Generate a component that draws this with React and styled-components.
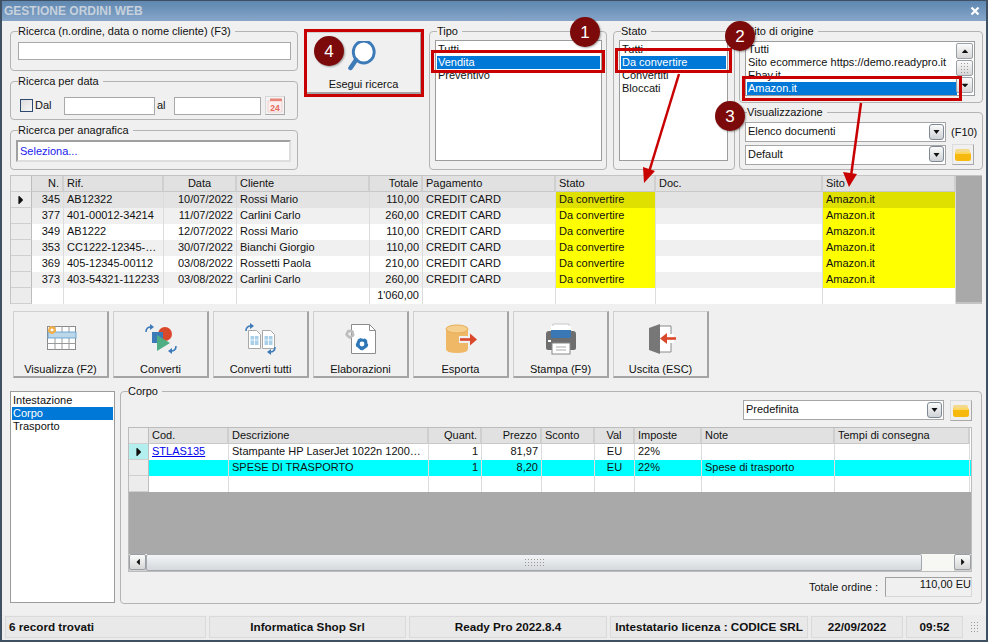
import React from "react";
import styled, { createGlobalStyle } from "styled-components";
import { FaCaretDown, FaCaretRight, FaCaretLeft, FaCaretUp } from "react-icons/fa";

const Global = createGlobalStyle`
  html, body { margin: 0; padding: 0; background: #f0f0f0; }
  * { box-sizing: border-box; }
`;

const Page = styled.div`
  position: relative;
  width: 988px;
  height: 642px;
  padding: 1px 2px 2px 2px;
  background: #3f5063;
  font-family: "Liberation Sans", "Noto Sans", sans-serif;
  font-size: 11px;
  line-height: 13px;
  color: #111;
  overflow: hidden;
`;

const Window = styled.div`
  height: 100%;
  display: flex;
  flex-direction: column;
  background: #f0f0f0;
`;

const TitleBar = styled.div`
  height: 20px;
  flex: none;
  display: flex;
  align-items: center;
  justify-content: space-between;
  padding: 0 6px 0 2px;
  background: linear-gradient(#5f87b0, #86a6c9);
  color: #c6d1dd;
  font-family: "Liberation Sans", sans-serif;
  font-weight: 700;
  font-size: 12px;
`;

const Content = styled.div`
  flex: 1;
  display: flex;
  flex-direction: column;
  padding: 10px 4px 0 8px;
`;

const TopRow = styled.div`
  display: flex;
  height: 139px;
  flex: none;
`;

const Column = styled.div`
  display: flex;
  flex-direction: column;
  width: ${(p) => p.$w}px;
  margin-left: ${(p) => p.$ml || 0}px;
  gap: ${(p) => p.$gap || 0}px;
  flex: none;
`;

const Group = styled.div`
  position: relative;
  flex: ${(p) => (p.$h ? "none" : 1)};
  height: ${(p) => (p.$h ? p.$h + "px" : "auto")};
  width: ${(p) => (p.$w ? p.$w + "px" : "auto")};
  margin-left: ${(p) => p.$ml || 0}px;
  border: 1px solid #b4b4b4;
  border-radius: 4px;
  padding: ${(p) => p.$pad || "9px 5px 5px"};
`;

const Legend = styled.span`
  position: absolute;
  left: 7px;
  top: -7px;
  padding: 0 4px 0 0;
  background: #f0f0f0;
  white-space: nowrap;
`;

const TextInput = styled.div`
  background: #fff;
  border: 1px solid #a8a8a8;
  height: ${(p) => p.$h || 18}px;
  width: ${(p) => (p.$w ? p.$w + "px" : "auto")};
  flex: ${(p) => (p.$w ? "none" : 1)};
  margin-left: ${(p) => p.$ml || 0}px;
`;

const SunkenInput = styled.div`
  height: 22px;
  background: #fff;
  border: 2px solid;
  border-color: #a0a0a0 #dedede #dedede #a0a0a0;
  color: #1a1aee;
  padding: 3px 2px;
`;

const DateRow = styled.div`
  display: flex;
  align-items: center;
  padding: 5px 0 0 4px;
`;

const Check = styled.span`
  width: 13px;
  height: 13px;
  border: 1px solid #2d4a6e;
  background: linear-gradient(135deg, #dcdcdc, #f6f6f6);
  flex: none;
`;

const DateLabel = styled.span`
  width: ${(p) => p.$w}px;
  padding-left: ${(p) => p.$pl}px;
  flex: none;
`;

const CalButton = styled.span`
  margin-left: 4px;
  width: 20px;
  height: 19px;
  flex: none;
  border: 1px solid;
  border-color: #d8d8d8 #a8a8a8 #a8a8a8 #d8d8d8;
  background: #f4f4f4;
  display: flex;
  align-items: center;
  justify-content: center;
`;

const BigButton = styled.div`
  width: 116px;
  height: 62px;
  margin: 1px 0 0 2px;
  display: flex;
  flex-direction: column;
  align-items: center;
  padding-top: 8px;
  gap: 5px;
  border: 1px solid;
  border-color: #d0d0d0 #a4a4a4 #a4a4a4 #d0d0d0;
  border-width: 1px 2px 2px 1px;
`;

const List = styled.div`
  background: #fff;
  border: 1px solid #9c9c9c;
  height: ${(p) => (p.$h ? p.$h + "px" : "auto")};
  flex: ${(p) => (p.$h ? "none" : 1)};
  width: ${(p) => (p.$w ? p.$w + "px" : "auto")};
  padding: ${(p) => p.$pad || "1px"};
  position: relative;
  overflow: hidden;
`;

const ListItem = styled.div`
  height: 13px;
  padding-left: 1px;
  white-space: nowrap;
  background: ${(p) => (p.$on ? "#0078d7" : "transparent")};
  color: ${(p) => (p.$on ? "#fff" : "#111")};
  margin-right: ${(p) => p.$mr || 0}px;
`;

const ListScroll = styled.div`
  position: absolute;
  right: 1px;
  top: 1px;
  width: 17px;
  display: flex;
  flex-direction: column;
  gap: 1px;
`;

const ScrollBtn = styled.span`
  height: ${(p) => p.$h || 16}px;
  width: ${(p) => p.$w || 17}px;
  flex: none;
  display: flex;
  align-items: center;
  justify-content: center;
  border: 1px solid #9aa0a6;
  border-radius: 2px;
  background: linear-gradient(#fbfbfb, #d6d6d6);
  color: #111;
  font-size: 10px;
`;

const ComboRow = styled.div`
  display: flex;
  align-items: center;
  margin: ${(p) => p.$m || "0"};
`;

const Combo = styled.div`
  width: ${(p) => p.$w || 201}px;
  height: 20px;
  flex: none;
  background: #fff;
  border: 1px solid #a6a6a6;
  display: flex;
  align-items: center;
  justify-content: space-between;
  padding: 0 1px 1px 2px;
`;

const FolderButton = styled.span`
  width: 22px;
  height: 21px;
  flex: none;
  margin-left: ${(p) => p.$ml || 6}px;
  border: 1px solid;
  border-color: #dcdcdc #a8a8a8 #a8a8a8 #dcdcdc;
  display: flex;
  align-items: center;
  justify-content: center;
`;

const Hint = styled.span`
  margin-left: 5px;
  white-space: nowrap;
`;

const GridWrap = styled.div`
  display: flex;
  flex: none;
  height: 129px;
  margin-top: 5px;
  border: 1px solid #c4c4c4;
  border-bottom-width: 2px;
  border-right: 0;
`;

const GridBody = styled.div`
  flex: none;
  background: #fff;
`;

const GreySide = styled.div`
  flex: 1;
  background: #a9a9a9;
`;

const Row = styled.div`
  display: grid;
  grid-template-columns: ${(p) => p.$cols};
  height: ${(p) => p.$h || 16}px;
  background: ${(p) => p.$bg || "#fff"};
`;

const Cell = styled.div`
  padding: 0 3px;
  line-height: 14px;
  white-space: nowrap;
  overflow: hidden;
  text-overflow: ellipsis;
  text-align: ${(p) => p.$align || "left"};
  border-right: 1px solid #dcdcdc;
  background: ${(p) => p.$bg || "transparent"};
  color: ${(p) => (p.$link ? "#0000ee" : "inherit")};
  text-decoration: ${(p) => (p.$link ? "underline" : "none")};
`;

const HeadCell = styled(Cell)`
  background: #e1e1e1;
  border-right: 2px solid #cfcfcf;
  border-bottom: 1px solid #c8c8c8;
`;

const Indicator = styled.div`
  background: ${(p) => p.$bg || "#ececec"};
  border-right: 1px solid #bdbdbd;
  border-bottom: 1px solid #cfcfcf;
  display: flex;
  align-items: center;
  justify-content: center;
  font-size: 14px;
  color: #111;
`;

const Toolbar = styled.div`
  display: flex;
  gap: 4px;
  flex: none;
  margin: 7px 0 0 3px;
`;

const ToolButton = styled.div`
  width: 96px;
  height: 67px;
  display: flex;
  flex-direction: column;
  align-items: center;
  justify-content: space-between;
  padding: 11px 0 0;
  border: solid;
  border-color: #d0d0d0 #a4a4a4 #a4a4a4 #d0d0d0;
  border-width: 1px 2px 2px 1px;
`;

const ToolIcon = styled.svg`
  width: 36px;
  height: 32px;
  flex: none;
`;

const ToolLabel = styled.span`
  height: 13px;
  white-space: nowrap;
`;

const BottomRow = styled.div`
  display: flex;
  flex: none;
  height: 213px;
  margin-top: 13px;
`;

const SideList = styled(List)`
  width: 105px;
  flex: none;
  height: 212px;
  padding: 2px 1px;
`;

const CorpoGroup = styled(Group)`
  flex: 1;
  margin-left: 5px;
  padding: 8px 9px 0 7px;
  display: flex;
  flex-direction: column;
`;

const CorpoTools = styled.div`
  display: flex;
  justify-content: flex-end;
  align-items: flex-start;
  height: 27px;
`;

const InnerGrid = styled.div`
  height: 145px;
  flex: none;
  display: flex;
  flex-direction: column;
  border: 1px solid #bcbcbc;
  background: #a9a9a9;
`;

const GreyFill = styled.div`
  flex: 1;
`;

const HScroll = styled.div`
  height: 17px;
  flex: none;
  display: flex;
  background: linear-gradient(#f6f6f6, #d2d2d2);
`;

const HThumb = styled.div`
  flex: 1;
  border: 1px solid #a2a8ae;
  border-radius: 2px;
  background: linear-gradient(#f2f4f6, #d5d8dc);
  display: flex;
  align-items: center;
  justify-content: center;
`;

const Grip = styled.span`
  flex: none;
  width: ${(p) => p.$w}px;
  height: ${(p) => p.$h}px;
  margin-left: ${(p) => p.$ml || 0}px;
  background-image: radial-gradient(#9a9a9a 0.7px, transparent 0.8px);
  background-size: 3px 3px;
`;

const HEnd = styled.div`
  width: 32px;
  flex: none;
  background: #f7f7f3;
`;

const TotalRow = styled.div`
  display: flex;
  justify-content: flex-end;
  align-items: center;
  margin-top: 5px;
  gap: 7px;
`;

const TotalBox = styled.div`
  width: 87px;
  height: 20px;
  border: 1px solid;
  border-color: #a0a0a0 #d8d8d8 #d8d8d8 #a0a0a0;
  text-align: right;
`;

const StatusBar = styled.div`
  flex: none;
  height: 25px;
  margin-top: auto;
  display: flex;
  align-items: center;
  gap: 3px;
  padding: 0 0 2px 3px;
  background: #ececec;
  font-family: "Liberation Sans", sans-serif;
  font-weight: 700;
  font-size: 11.7px;
`;

const StatusCell = styled.div`
  width: ${(p) => p.$w}px;
  height: 22px;
  flex: none;
  display: flex;
  align-items: center;
  justify-content: ${(p) => (p.$left ? "flex-start" : "center")};
  padding-left: ${(p) => (p.$left ? 3 : 0)}px;
  background: #e9e9e9;
  border: 1px solid #dadada;
  white-space: nowrap;
`;

const RedBox = styled.div`
  position: absolute;
  left: ${(p) => p.$x}px;
  top: ${(p) => p.$y}px;
  width: ${(p) => p.$w}px;
  height: ${(p) => p.$h}px;
  border: 3px solid #c80000;
`;

const Badge = styled.div`
  position: absolute;
  left: ${(p) => p.$x - 15}px;
  top: ${(p) => p.$y - 15}px;
  width: 30px;
  height: 30px;
  border-radius: 50%;
  background: #7c0a0a;
  box-shadow: 1px 1px 2px rgba(0, 0, 0, 0.35);
  color: #fff;
  font-family: "Liberation Sans", sans-serif;
  font-size: 17px;
  display: flex;
  align-items: center;
  justify-content: center;
`;

const Arrows = styled.svg`
  position: absolute;
  left: 0;
  top: 0;
  pointer-events: none;
`;

const Arrow = () => (
  <svg width="9" height="9" viewBox="0 0 9 9">
    <path d="M1.5 3h6L4.5 7z" fill="#111" />
  </svg>
);

const ComboArrow = styled.span`
  width: 15px;
  height: 16px;
  border: 1px solid #7f8a94;
  border-radius: 3px;
  background: linear-gradient(#fbfbfb, #cfd2d6);
  display: flex;
  align-items: center;
  justify-content: center;
`;

const Folder = () => (
  <svg width="18" height="14" viewBox="0 0 18 14">
    <path d="M1 3q0-2 2-2h11q2 0 2 2v2H1z" fill="#f5d98a" />
    <rect x="1" y="4" width="16" height="9" rx="2.5" fill="#f8b90f" />
    <rect x="2" y="4" width="14" height="2" fill="#fcd763" />
  </svg>
);

const Search = () => (
  <svg width="32" height="32" viewBox="0 0 32 32">
    <circle cx="15" cy="11" r="11" fill="#fff" stroke="#3d7ab8" strokeWidth="3" transform="translate(1.5 0) scale(.95 1)" />
    <path d="M8 19L2.500 27" stroke="#3d7ab8" strokeWidth="4.5" strokeLinecap="round" />
  </svg>
);

const Calendar = () => (
  <svg width="16" height="15" viewBox="0 0 16 15">
    <rect x="1" y="3" width="14" height="11" fill="#fbeeee" stroke="#eec4bc" strokeWidth="0.7" />
    <rect x="3" y="0.5" width="12" height="2.500" fill="#e8867a" />
    <text x="8" y="12.5" textAnchor="middle" fontSize="8.5" fontWeight="700" fill="#e2685c" fontFamily="Liberation Sans">24</text>
  </svg>
);

const Gear = ({ x, y, r, color }) => (
  <g>
    <circle cx={x} cy={y} r={r} fill="none" stroke={color} strokeWidth={r * 0.8} />
    <circle cx={x} cy={y} r={r * 1.3} fill="none" stroke={color} strokeWidth={r * 0.5} strokeDasharray={`${r * 0.85} ${r * 0.78}`} />
  </g>
);

const Turn = ({ d }) => (
  <path d={d} fill="none" stroke="#3d7ab8" strokeWidth="1.6" />
);

const IconVisualizza = () => (
  <ToolIcon viewBox="0 0 36 32">
    <rect x="4.5" y="3.5" width="28" height="23" fill="#fff" stroke="#8a8a8a" />
    <path d="M4 9.5h29M4 20.5h29M4 14h29M12 3v24M19 3v24M26 3v24" stroke="#9a9a9a" strokeWidth="1" />
    <rect x="5" y="9" width="28" height="6" fill="#bcd6ea" stroke="#5a9ccc" strokeWidth="0.8" />
    <Gear x={9} y={7} r={2.6} color="#f2b04a" />
  </ToolIcon>
);

const IconConverti = () => (
  <ToolIcon viewBox="0 0 36 32">
    <Turn d="M3 9q0-5 5-5" />
    <path d="M7 1l4 3-4 3z" fill="#3d7ab8" />
    <circle cx="22" cy="11" r="7" fill="#d9482b" />
    <rect x="9" y="9" width="11" height="11" fill="#3d7ab8" />
    <path d="M14 12l13 8-13 8z" fill="#4fae84" />
    <Turn d="M33 23q0 5-5 5" />
    <path d="M29 25l-4 3 4 3z" fill="#3d7ab8" />
  </ToolIcon>
);

const IconDoc = ({ x }) => (
  <g transform={`translate(${x} 7)`}>
    <path d="M.5.5h8l4 4v14H.5z" fill="#fff" stroke="#a8a8a8" />
    <rect x="2.5" y="6" width="8" height="9" fill="#a9cfe9" />
    <path d="M2.5 10h8M6.5 6v9" stroke="#fff" strokeWidth="0.8" />
  </g>
);

const IconConvertiTutti = () => (
  <ToolIcon viewBox="0 0 36 32">
    <Turn d="M3 8q0-5 5-5" />
    <path d="M7 0l4 3-4 3z" fill="#3d7ab8" />
    <IconDoc x={5} />
    <IconDoc x={19} />
    <Turn d="M32 24q0 5-5 5" />
    <path d="M28 26l-4 3 4 3z" fill="#3d7ab8" />
  </ToolIcon>
);

const IconElaborazioni = () => (
  <ToolIcon viewBox="0 0 36 32">
    <path d="M8.5 1.5h18l6 6v23h-24z" fill="#fff" stroke="#8c8c8c" />
    <path d="M26.5 1.5v6h6" fill="none" stroke="#8c8c8c" />
    <Gear x={7} y={11} r={3} color="#bdbdbd" />
    <Gear x={19} y={21} r={4} color="#2f78b7" />
  </ToolIcon>
);

const IconEsporta = () => (
  <ToolIcon viewBox="0 0 36 32">
    <path d="M3 6v20q0 4 11 4t11-4V6z" fill="#efb866" />
    <ellipse cx="14" cy="6" rx="11" ry="4" fill="#f5cf8e" stroke="#e9ad55" />
    <rect x="16" y="13" width="13" height="7" fill="#f0f0f0" />
    <path d="M17 16.5h12" stroke="#d9482b" strokeWidth="2.6" />
    <path d="M27 10.5l7 6-7 6z" fill="#d9482b" />
  </ToolIcon>
);

const IconStampa = () => (
  <ToolIcon viewBox="0 0 36 32">
    <path d="M10 1h16l1 9H9z" fill="#fff" stroke="#c8c8c8" />
    <rect x="8" y="3" width="20" height="14" fill="#fff" />
    <rect x="9" y="7" width="18" height="9" fill="#3a78b5" />
    <path d="M3 11q0-3 3-3h24q3 0 3 3v14q0 2-2 2H5q-2 0-2-2z" fill="#6e6e6e" />
    <rect x="8" y="7" width="20" height="8" fill="#3a78b5" />
    <rect x="5" y="17" width="3" height="2" fill="#fff" />
    <rect x="9" y="20" width="18" height="11" fill="#fff" stroke="#888" />
    <path d="M13 24h10M13 27h10" stroke="#aaa" />
  </ToolIcon>
);

const IconUscita = () => (
  <ToolIcon viewBox="0 0 36 32">
    <path d="M15 3h13v26h-13" fill="#fff" stroke="#8a8a8a" />
    <path d="M6 5l11-4v30L6 27z" fill="#777" />
    <rect x="17" y="11" width="14" height="9" fill="#fff" />
    <path d="M21 15.5h12" stroke="#d9482b" strokeWidth="2.6" />
    <path d="M24 10l-7 5.500 7 5.500z" fill="#d9482b" />
  </ToolIcon>
);

const mainCols = "21px 32px 100px 73px 133px 53px 133px 100px 167px 133px";
const subCols = "20px 80px 200px 53px 60px 53px 40px 67px 133px 135px";

const orders = [
  ["345", "AB12322", "10/07/2022", "Rossi Mario", "110,00"],
  ["377", "401-00012-34214", "11/07/2022", "Carlini Carlo", "260,00"],
  ["349", "AB1222", "12/07/2022", "Rossi Mario", "110,00"],
  ["353", "CC1222-12345-00112", "30/07/2022", "Bianchi Giorgio", "110,00"],
  ["369", "405-12345-00112", "03/08/2022", "Rossetti Paola", "210,00"],
  ["373", "403-54321-112233", "03/08/2022", "Carlini Carlo", "260,00"],
];

const rowBg = ["#e3e3e3", "#f0f0f0", "#fff", "#f0f0f0", "#fff", "#f0f0f0"];

const tools = [
  ["Visualizza (F2)", IconVisualizza],
  ["Converti", IconConverti],
  ["Converti tutti", IconConvertiTutti],
  ["Elaborazioni", IconElaborazioni],
  ["Esporta", IconEsporta],
  ["Stampa (F9)", IconStampa],
  ["Uscita (ESC)", IconUscita],
];

export default function App() {
  return (
    <Page>
      <Global />
      <Window>
        <TitleBar>
          <span>GESTIONE ORDINI WEB</span>
          <svg width="10" height="10" viewBox="0 0 10 10">
            <path d="M1.500 1.500l7 7M8.500 1.500l-7 7" stroke="#fff" strokeWidth="2.200" />
          </svg>
        </TitleBar>
        <Content>
          <TopRow>
            <Column $w={288} $gap={10}>
              <Group $h={40} $pad="10px 6px 0 7px">
                <Legend>Ricerca (n.ordine, data o nome cliente) (F3)</Legend>
                <TextInput />
              </Group>
              <Group $h={39} $pad="9px 0 0 5px">
                <Legend>Ricerca per data</Legend>
                <DateRow>
                  <Check />
                  <DateLabel $w={31} $pl={2}>Dal</DateLabel>
                  <TextInput $w={91} />
                  <DateLabel $w={19} $pl={2}>al</DateLabel>
                  <TextInput $w={87} />
                  <CalButton><Calendar /></CalButton>
                </DateRow>
              </Group>
              <Group $h={40} $pad="9px 6px 0 5px">
                <Legend>Ricerca per anagrafica</Legend>
                <SunkenInput>Seleziona...</SunkenInput>
              </Group>
            </Column>
            <Column $w={120} $ml={6}>
              <BigButton>
                <Search />
                <span>Esegui ricerca</span>
              </BigButton>
            </Column>
            <Group $w={178} $ml={5} $h={139} $pad="8px 4px 8px 5px">
              <Legend>Tipo</Legend>
              <List $h={121} $pad="2px 1px">
                <ListItem>Tutti</ListItem>
                <ListItem $on>Vendita</ListItem>
                <ListItem>Preventivo</ListItem>
              </List>
            </Group>
            <Group $w={122} $ml={6} $h={139} $pad="8px 6px 8px 5px">
              <Legend>Stato</Legend>
              <List $h={121} $pad="2px 1px">
                <ListItem>Tutti</ListItem>
                <ListItem $on>Da convertire</ListItem>
                <ListItem>Convertiti</ListItem>
                <ListItem>Bloccati</ListItem>
              </List>
            </Group>
            <Column $w={244} $ml={4} $gap={9}>
              <Group $h={72} $pad="9px 7px 0 5px">
                <Legend>Sito di origine</Legend>
                <List $h={55} $pad="1px">
                  <ListItem>Tutti</ListItem>
                  <ListItem>Sito ecommerce https://demo.readypro.it</ListItem>
                  <ListItem>Ebay.it</ListItem>
                  <ListItem $on $mr={16}>Amazon.it</ListItem>
                  <ListScroll>
                    <ScrollBtn><FaCaretUp /></ScrollBtn>
                    <ScrollBtn><Grip $w={9} $h={12} /></ScrollBtn>
                    <ScrollBtn><FaCaretDown /></ScrollBtn>
                  </ListScroll>
                </List>
              </Group>
              <Group $h={58} $pad="9px 0 0 5px">
                <Legend>Visualizzazione</Legend>
                <ComboRow>
                  <Combo>Elenco documenti<ComboArrow><Arrow /></ComboArrow></Combo>
                  <Hint>(F10)</Hint>
                </ComboRow>
                <ComboRow $m="2px 0 0">
                  <Combo>Default<ComboArrow><Arrow /></ComboArrow></Combo>
                  <FolderButton><Folder /></FolderButton>
                </ComboRow>
              </Group>
            </Column>
          </TopRow>

          <GridWrap>
            <GridBody>
              <Row $cols={mainCols} $h={16}>
                <Indicator />
                <HeadCell $align="right">N.</HeadCell>
                <HeadCell>Rif.</HeadCell>
                <HeadCell $align="center">Data</HeadCell>
                <HeadCell>Cliente</HeadCell>
                <HeadCell $align="right">Totale</HeadCell>
                <HeadCell>Pagamento</HeadCell>
                <HeadCell>Stato</HeadCell>
                <HeadCell>Doc.</HeadCell>
                <HeadCell>Sito</HeadCell>
              </Row>
              {orders.map((o, i) => (
                <Row key={o[0]} $cols={mainCols} $bg={rowBg[i]}>
                  <Indicator>{i === 0 && <FaCaretRight />}</Indicator>
                  <Cell $align="right">{o[0]}</Cell>
                  <Cell>{o[1]}</Cell>
                  <Cell $align="right">{o[2]}</Cell>
                  <Cell>{o[3]}</Cell>
                  <Cell $align="right">{o[4]}</Cell>
                  <Cell>CREDIT CARD</Cell>
                  <Cell $bg={i === 0 ? "#e0e000" : "#ffff00"}>Da convertire</Cell>
                  <Cell />
                  <Cell $bg={i === 0 ? "#e0e000" : "#ffff00"}>Amazon.it</Cell>
                </Row>
              ))}
              <Row $cols={mainCols}>
                <Indicator />
                <Cell />
                <Cell />
                <Cell />
                <Cell />
                <Cell $align="right">1'060,00</Cell>
                <Cell />
                <Cell />
                <Cell />
                <Cell />
              </Row>
            </GridBody>
            <GreySide />
          </GridWrap>

          <Toolbar>
            {tools.map(([label, Icon]) => (
              <ToolButton key={label}>
                <Icon />
                <ToolLabel>{label}</ToolLabel>
              </ToolButton>
            ))}
          </Toolbar>

          <BottomRow>
            <SideList>
              <ListItem>Intestazione</ListItem>
              <ListItem $on>Corpo</ListItem>
              <ListItem>Trasporto</ListItem>
            </SideList>
            <CorpoGroup>
              <Legend>Corpo</Legend>
              <CorpoTools>
                <Combo>Predefinita<ComboArrow><Arrow /></ComboArrow></Combo>
                <FolderButton><Folder /></FolderButton>
              </CorpoTools>
              <InnerGrid>
                <Row $cols={subCols}>
                  <Indicator />
                  <HeadCell>Cod.</HeadCell>
                  <HeadCell>Descrizione</HeadCell>
                  <HeadCell $align="right">Quant.</HeadCell>
                  <HeadCell $align="right">Prezzo</HeadCell>
                  <HeadCell>Sconto</HeadCell>
                  <HeadCell $align="center">Val</HeadCell>
                  <HeadCell>Imposte</HeadCell>
                  <HeadCell>Note</HeadCell>
                  <HeadCell>Tempi di consegna</HeadCell>
                </Row>
                <Row $cols={subCols}>
                  <Indicator $bg="#b4eff0"><FaCaretRight /></Indicator>
                  <Cell $link>STLAS135</Cell>
                  <Cell>Stampante HP LaserJet 1022n 1200x1200dpi</Cell>
                  <Cell $align="right">1</Cell>
                  <Cell $align="right">81,97</Cell>
                  <Cell />
                  <Cell $align="center">EU</Cell>
                  <Cell>22%</Cell>
                  <Cell />
                  <Cell />
                </Row>
                <Row $cols={subCols} $bg="#00ffff">
                  <Indicator />
                  <Cell />
                  <Cell>SPESE DI TRASPORTO</Cell>
                  <Cell $align="right">1</Cell>
                  <Cell $align="right">8,20</Cell>
                  <Cell />
                  <Cell $align="center">EU</Cell>
                  <Cell>22%</Cell>
                  <Cell>Spese di trasporto</Cell>
                  <Cell />
                </Row>
                <Row $cols={subCols}>
                  <Indicator />
                  <Cell />
                  <Cell />
                  <Cell />
                  <Cell />
                  <Cell />
                  <Cell />
                  <Cell />
                  <Cell />
                  <Cell />
                </Row>
                <GreyFill />
                <HScroll>
                  <ScrollBtn><FaCaretLeft /></ScrollBtn>
                  <HThumb><Grip $w={21} $h={9} /></HThumb>
                  <HEnd />
                  <ScrollBtn><FaCaretRight /></ScrollBtn>
                </HScroll>
              </InnerGrid>
              <TotalRow>
                <span>Totale ordine :</span>
                <TotalBox>110,00 EU</TotalBox>
              </TotalRow>
            </CorpoGroup>
          </BottomRow>
        </Content>
        <StatusBar>
          <StatusCell $w={201} $left>6 record trovati</StatusCell>
          <StatusCell $w={197}>Informatica Shop Srl</StatusCell>
          <StatusCell $w={198}>Ready Pro 2022.8.4</StatusCell>
          <StatusCell $w={198}>Intestatario licenza : CODICE SRL</StatusCell>
          <StatusCell $w={92}>22/09/2022</StatusCell>
          <StatusCell $w={57}>09:52</StatusCell>
          <Grip $w={9} $h={12} $ml={4} />
        </StatusBar>
      </Window>

      <RedBox $x={304} $y={29} $w={120} $h={68} />
      <RedBox $x={431} $y={50} $w={174} $h={23} />
      <RedBox $x={615} $y={48} $w={117} $h={25} />
      <RedBox $x={742} $y={76} $w={220} $h={25} />
      <Arrows width="988" height="642" viewBox="0 0 988 642">
        <path d="M679 74L649 172" stroke="#c80000" strokeWidth="2.500" />
        <path d="M644 183L643 167L655 171z" fill="#c80000" />
        <path d="M861 103L851 176" stroke="#c80000" strokeWidth="2.500" />
        <path d="M849 187L843 172L857 174z" fill="#c80000" />
      </Arrows>
      <Badge $x={585} $y={32}>1</Badge>
      <Badge $x={740} $y={36}>2</Badge>
      <Badge $x={730} $y={116}>3</Badge>
      <Badge $x={329} $y={51}>4</Badge>
    </Page>
  );
}
